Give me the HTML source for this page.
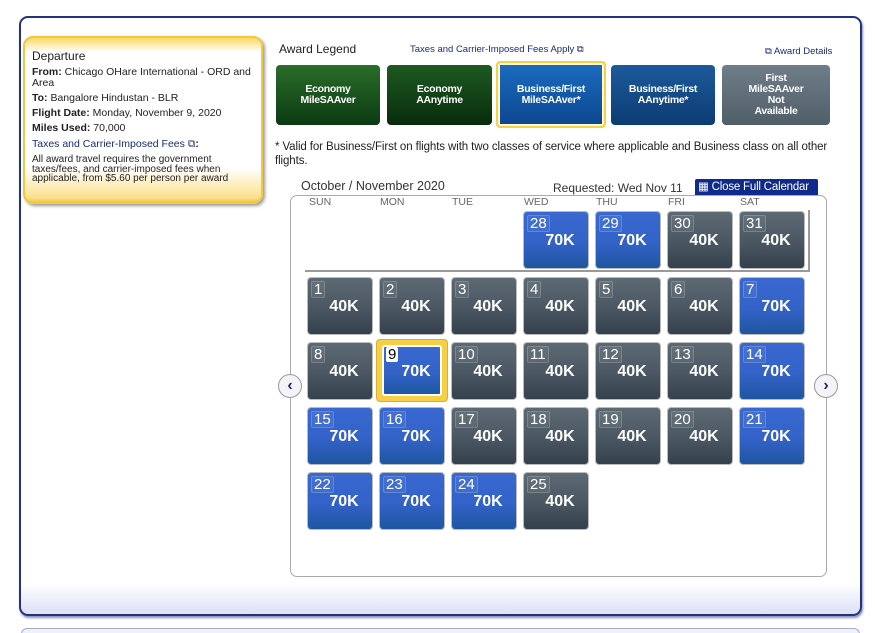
<!DOCTYPE html>
<html><head><meta charset="utf-8"><style>
*{margin:0;padding:0;box-sizing:border-box}
html,body{width:875px;height:633px;overflow:hidden}
body{background:#fff;font-family:"Liberation Sans",Arial,sans-serif;position:relative;color:#222}
.abs{position:absolute}
#outer{left:19px;top:16px;width:843px;height:600px;border:2px solid #25337f;border-radius:9px;background:linear-gradient(#fff 0,#fff 566px,#e2e6f8 590px,#dfe3f6 100%);box-shadow:1px 2px 2px #8890b8}
#next{left:21px;top:628px;width:839px;height:20px;border:1px solid #a8acc4;border-radius:6px;background:#eef0fa}
#dep{left:23px;top:36px;width:240px;height:168px;border:2px solid #f0c93e;border-radius:10px;background:linear-gradient(#fbd866 0,#fff 14px,#fff 130px,#fbe08a 160px,#f3c540 100%);box-shadow:2px 2px 3px #999;font-size:10.5px;padding:13px 0 0 7px;line-height:11px}
#dep b{font-weight:bold}
#dep .r{margin-top:4px}
.leg{top:65px;height:60px;border-radius:4px;color:#fff;font-size:10.5px;font-weight:bold;text-align:center;display:flex;align-items:center;justify-content:center;line-height:11px;letter-spacing:-0.3px}
.g{background:linear-gradient(#2a6d2a,#0c3a12)}
.bb{background:linear-gradient(#1c6cc0,#0c4690)}
.bd{background:linear-gradient(#1c5a9c,#0d3c72)}
.gr{background:linear-gradient(#6f7e88,#4f5e68)}
#cal{left:290px;top:195px;width:537px;height:382px;border:1px solid #aaa;border-radius:7px}
.dh{top:196px;font-size:10.5px;color:#666}
.c{width:64px;height:56px;border-radius:3px;color:#fff;box-shadow:0 0 0 1px #bbb}
.c .n{position:absolute;left:3px;top:3px;font-size:15px;line-height:15px;padding:0 2px;border:1px solid rgba(255,255,255,.18);background:rgba(255,255,255,.06);border-radius:2px}
.c .v{position:absolute;left:0;right:0;top:20px;text-align:center;font-size:16px;font-weight:bold;padding-left:8px}
.B{background:linear-gradient(#3868d0 0,#3362c8 55%,#1e56a0 100%)}
.G{background:linear-gradient(#5d6a74 0,#4a5762 55%,#34404c 100%)}
.circ{width:24px;height:24px;border-radius:50%;border:1px solid #999;background:#f4f4f8;color:#1a2a6a;font-size:16px;font-weight:bold;text-align:center;line-height:21px}
</style></head><body>
<div id="outer" class="abs"></div>
<div id="next" class="abs"></div>

<div id="dep" class="abs">
<div style="font-size:12px;margin-bottom:5px">Departure</div>
<div><b>From:</b> Chicago OHare International - ORD and<br>Area</div>
<div class="r"><b>To:</b> Bangalore Hindustan - BLR</div>
<div class="r"><b>Flight Date:</b> Monday, November 9, 2020</div>
<div class="r"><b>Miles Used:</b> 70,000</div>
<div class="r" style="color:#1a2a7a;margin-top:5px">Taxes and Carrier-Imposed Fees ⧉<b style="color:#222">:</b></div>
<div style="margin-top:5px;font-size:10px;line-height:9.5px;width:222px">All award travel requires the government<br>taxes/fees, and carrier-imposed fees when<br>applicable, from $5.60 per person per award</div>
</div>

<div class="abs" style="left:279px;top:42px;font-size:12px">Award Legend</div>
<div class="abs" style="left:410px;top:44px;font-size:9.5px;color:#1a2a7a">Taxes and Carrier-Imposed Fees Apply ⧉</div>
<div class="abs" style="left:765px;top:46px;font-size:9.5px;color:#1a2a7a">⧉ Award Details</div>

<div class="abs leg g" style="left:276px;width:104px">Economy<br>MileSAAver</div>
<div class="abs leg g" style="left:387px;width:105px;background:linear-gradient(#1e5a22,#082c0c)">Economy<br>AAnytime</div>
<div class="abs leg bb" style="left:496px;top:61px;width:110px;height:67px;border:2px solid #f2d24a;box-shadow:inset 0 0 0 2px #fff8d0">Business/First<br>MileSAAver*</div>
<div class="abs leg bd" style="left:611px;width:104px">Business/First<br>AAnytime*</div>
<div class="abs leg gr" style="left:722px;width:108px">First<br>MileSAAver<br>Not<br>Available</div>

<div class="abs" style="left:275px;top:140px;font-size:11.5px;line-height:14px;width:580px;letter-spacing:-0.1px">* Valid for Business/First on flights with two classes of service where applicable and Business class on all other flights.</div>

<div class="abs" style="left:301px;top:179px;font-size:12.5px;color:#333">October / November 2020</div>
<div class="abs" style="left:553px;top:181px;font-size:12px;color:#333">Requested: Wed Nov 11</div>
<div class="abs" style="left:695px;top:179px;width:123px;height:16px;background:#0f2a8a;color:#fff;font-size:11.5px;line-height:16px;padding-left:3px;border-radius:2px 2px 0 0;white-space:nowrap;letter-spacing:-0.2px">▦ Close Full Calendar</div>

<div id="cal" class="abs"></div>
<div class="abs dh" style="left:309px">SUN</div>
<div class="abs dh" style="left:380px">MON</div>
<div class="abs dh" style="left:452px">TUE</div>
<div class="abs dh" style="left:524px">WED</div>
<div class="abs dh" style="left:596px">THU</div>
<div class="abs dh" style="left:668px">FRI</div>
<div class="abs dh" style="left:740px">SAT</div>
<div class="abs" style="left:305px;top:270px;width:505px;height:2px;background:#999"></div>
<div class="abs" style="left:808px;top:210px;width:2px;height:62px;background:#999"></div>

<div class="abs circ" style="left:278px;top:374px">‹</div>
<div class="abs circ" style="left:814px;top:374px">›</div>

<div class="abs c B" style="left:524px;top:212px"><span class="n">28</span><span class="v">70K</span></div>
<div class="abs c B" style="left:596px;top:212px"><span class="n">29</span><span class="v">70K</span></div>
<div class="abs c G" style="left:668px;top:212px"><span class="n">30</span><span class="v">40K</span></div>
<div class="abs c G" style="left:740px;top:212px"><span class="n">31</span><span class="v">40K</span></div>

<div class="abs c G" style="left:308px;top:278px"><span class="n">1</span><span class="v">40K</span></div>
<div class="abs c G" style="left:380px;top:278px"><span class="n">2</span><span class="v">40K</span></div>
<div class="abs c G" style="left:452px;top:278px"><span class="n">3</span><span class="v">40K</span></div>
<div class="abs c G" style="left:524px;top:278px"><span class="n">4</span><span class="v">40K</span></div>
<div class="abs c G" style="left:596px;top:278px"><span class="n">5</span><span class="v">40K</span></div>
<div class="abs c G" style="left:668px;top:278px"><span class="n">6</span><span class="v">40K</span></div>
<div class="abs c B" style="left:740px;top:278px"><span class="n">7</span><span class="v">70K</span></div>

<div class="abs c G" style="left:308px;top:343px"><span class="n">8</span><span class="v">40K</span></div>
<div class="abs" style="left:377px;top:340px;width:70px;height:61px;background:#f6cf45;border-radius:3px;box-shadow:0 0 0 1px #d8b030"></div>
<div class="abs c B" style="left:382px;top:345px;width:60px;height:51px;border:2px solid #fff;box-shadow:none"><span class="n" style="background:#fff;color:#000;left:2px;top:0;border:none">9</span><span class="v" style="top:16px">70K</span></div>
<div class="abs c G" style="left:452px;top:343px"><span class="n">10</span><span class="v">40K</span></div>
<div class="abs c G" style="left:524px;top:343px"><span class="n">11</span><span class="v">40K</span></div>
<div class="abs c G" style="left:596px;top:343px"><span class="n">12</span><span class="v">40K</span></div>
<div class="abs c G" style="left:668px;top:343px"><span class="n">13</span><span class="v">40K</span></div>
<div class="abs c B" style="left:740px;top:343px"><span class="n">14</span><span class="v">70K</span></div>

<div class="abs c B" style="left:308px;top:408px"><span class="n">15</span><span class="v">70K</span></div>
<div class="abs c B" style="left:380px;top:408px"><span class="n">16</span><span class="v">70K</span></div>
<div class="abs c G" style="left:452px;top:408px"><span class="n">17</span><span class="v">40K</span></div>
<div class="abs c G" style="left:524px;top:408px"><span class="n">18</span><span class="v">40K</span></div>
<div class="abs c G" style="left:596px;top:408px"><span class="n">19</span><span class="v">40K</span></div>
<div class="abs c G" style="left:668px;top:408px"><span class="n">20</span><span class="v">40K</span></div>
<div class="abs c B" style="left:740px;top:408px"><span class="n">21</span><span class="v">70K</span></div>

<div class="abs c B" style="left:308px;top:473px"><span class="n">22</span><span class="v">70K</span></div>
<div class="abs c B" style="left:380px;top:473px"><span class="n">23</span><span class="v">70K</span></div>
<div class="abs c B" style="left:452px;top:473px"><span class="n">24</span><span class="v">70K</span></div>
<div class="abs c G" style="left:524px;top:473px"><span class="n">25</span><span class="v">40K</span></div>
</body></html>
